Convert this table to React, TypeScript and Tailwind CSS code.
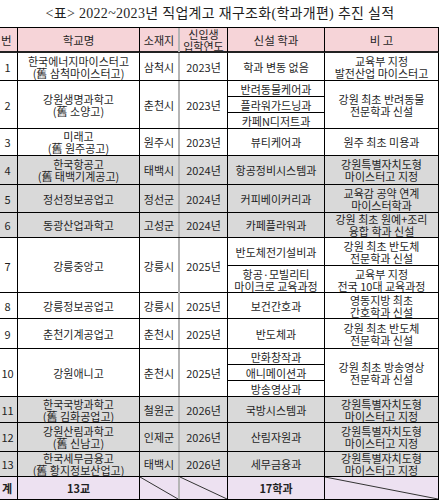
type Row = {
  n: string;
  school: string[];
  loc: string;
  year: string;
  h: number;
  gray?: boolean;
  depts?: string[][];
  note?: string[];
  subs?: { dept: string[]; note: string[]; h: number }[];
};

const rows: Row[] = [
  { n: '1', school: ['한국에너지마이스터고', '(舊 삼척마이스터고)'], loc: '삼척시', year: '2023년', h: 28, depts: [['학과 변동 없음']], note: ['교육부 지정', '발전산업 마이스터고'] },
  { n: '2', school: ['강원생명과학고', '(舊 소양고)'], loc: '춘천시', year: '2023년', h: 48, depts: [['반려동물케어과'], ['플라워가드닝과'], ['카페N디저트과']], note: ['강원 최초 반려동물', '전문학과 신설'] },
  { n: '3', school: ['미래고', '(舊 원주공고)'], loc: '원주시', year: '2023년', h: 27, depts: [['뷰티케어과']], note: ['원주 최초 미용과'] },
  { n: '4', school: ['한국항공고', '(舊 태백기계공고)'], loc: '태백시', year: '2024년', h: 29, gray: true, depts: [['항공정비시스템과']], note: ['강원특별자치도형', '마이스터고 지정'] },
  { n: '5', school: ['정선정보공업고'], loc: '정선군', year: '2024년', h: 28, gray: true, depts: [['커피베이커리과']], note: ['교육감 공약 연계', '마이스터학과'] },
  { n: '6', school: ['동광산업과학고'], loc: '고성군', year: '2024년', h: 25, gray: true, depts: [['카페플라워과']], note: ['강원 최초 원예+조리', '융합 학과 신설'] },
  {
    n: '7', school: ['강릉중앙고'], loc: '강릉시', year: '2025년', h: 55,
    subs: [
      { dept: ['반도체전기설비과'], note: ['강원 최초 반도체', '전문학과 신설'], h: 28 },
      { dept: ['항공·모빌리티', '마이크로 교육과정'], note: ['교육부 지정', '전국 10대 교육과정'], h: 27 },
    ],
  },
  { n: '8', school: ['강릉정보공업고'], loc: '강릉시', year: '2025년', h: 26, depts: [['보건간호과']], note: ['영동지방 최초', '간호학과 신설'] },
  { n: '9', school: ['춘천기계공업고'], loc: '춘천시', year: '2025년', h: 30, depts: [['반도체과']], note: ['강원 최초 반도체', '전문학과 신설'] },
  { n: '10', school: ['강원애니고'], loc: '춘천시', year: '2025년', h: 48, depts: [['만화창작과'], ['애니메이션과'], ['방송영상과']], note: ['강원 최초 방송영상', '전문학과 신설'] },
  { n: '11', school: ['한국국방과학고', '(舊 김화공업고)'], loc: '철원군', year: '2026년', h: 26, gray: true, depts: [['국방시스템과']], note: ['강원특별자치도형', '마이스터고 지정'] },
  { n: '12', school: ['강원산림과학고', '(舊 신남고)'], loc: '인제군', year: '2026년', h: 29, gray: true, depts: [['산림자원과']], note: ['강원특별자치도형', '마이스터고 지정'] },
  { n: '13', school: ['한국세무금융고', '(舊 황지정보산업고)'], loc: '태백시', year: '2026년', h: 25, gray: true, depts: [['세무금융과']], note: ['강원특별자치도형', '마이스터고 지정'] },
];

const cell = 'flex flex-col items-center justify-center text-center border-r border-black';

const Lines = ({ lines }: { lines: string[] }) => (
  <>
    {lines.map((l) => (
      <span key={l} className="whitespace-nowrap">{l}</span>
    ))}
  </>
);

const Diagonal = () => (
  <svg className="absolute inset-0 h-full w-full" viewBox="0 0 100 100" preserveAspectRatio="none">
    <line x1="0" y1="0" x2="100" y2="100" stroke="#333" strokeWidth="1" vectorEffect="non-scaling-stroke" />
  </svg>
);

export default function App() {
  return (
    <div className="w-[440px] h-[500px] overflow-hidden bg-white text-[#1f1f1f] font-['Noto_Sans_CJK_KR',sans-serif]">
      <div className="h-[27px] flex items-center justify-center pb-[1px] text-[14px] tracking-[0.3px] font-['Liberation_Serif','Noto_Sans_CJK_KR',serif]">
        {'<표> 2022~2023년 직업계고 재구조화(학과개편) 추진 실적'}
      </div>

      <div className="w-[439px] border-t border-black text-[11px] leading-[12px]">
        {/* header */}
        <div className="grid grid-cols-[18px_122px_40px_48px_97px_114px] h-[25px] bg-[#f6d4d8] border-b-2 border-[#222]">
          <div className="flex items-center border-r border-black text-[11.5px] pl-[1px]">번</div>
          <div className={`${cell} text-[11.5px]`}>학교명</div>
          <div className="flex items-center justify-center border-r-2 border-[#b5b5b5]">소재지</div>
          <div className={cell}>
            <span>신입생</span>
            <span>입학연도</span>
          </div>
          <div className={`${cell} text-[11.5px]`}>신설 학과</div>
          <div className={`${cell} text-[11.5px]`}>비 고</div>
        </div>

        {rows.map((r) => (
          <div
            key={r.n}
            style={{ height: r.h }}
            className={`grid grid-cols-[18px_122px_40px_48px_211px] border-b border-black ${r.gray ? 'bg-[#d9d9d9]' : 'bg-white'}`}
          >
            <div className={`${cell} pr-[2px]`}>{r.n}</div>
            <div className={cell}>
              <Lines lines={r.school} />
            </div>
            <div className="flex items-center justify-center border-r-2 border-[#b5b5b5]">{r.loc}</div>
            <div className={cell}>{r.year}</div>
            {r.subs ? (
              <div className="flex flex-col">
                {r.subs.map((s, i) => (
                  <div
                    key={i}
                    style={{ height: s.h }}
                    className={`grid grid-cols-[97px_114px] ${i < r.subs!.length - 1 ? 'border-b border-black' : ''}`}
                  >
                    <div className={cell}>
                      <Lines lines={s.dept} />
                    </div>
                    <div className={cell}>
                      <Lines lines={s.note} />
                    </div>
                  </div>
                ))}
              </div>
            ) : (
              <div className="grid grid-cols-[97px_114px]">
                <div className="flex flex-col border-r border-black">
                  {r.depts!.map((d, i) => (
                    <div
                      key={i}
                      className={`flex flex-1 flex-col items-center justify-center text-center ${i < r.depts!.length - 1 ? 'border-b border-black' : ''}`}
                    >
                      <Lines lines={d} />
                    </div>
                  ))}
                </div>
                <div className={cell}>
                  <Lines lines={r.note!} />
                </div>
              </div>
            )}
          </div>
        ))}

        {/* total */}
        <div className="grid grid-cols-[18px_122px_40px_48px_97px_114px] h-[23px] bg-[#ede1f1] border-b border-black">
          <div className="flex items-center border-r border-black font-bold pl-[2px]">계</div>
          <div className={`${cell} font-bold`}>13교</div>
          <div className="relative border-r-2 border-[#b5b5b5]">
            <Diagonal />
          </div>
          <div className="relative border-r border-black">
            <Diagonal />
          </div>
          <div className={`${cell} font-bold`}>17학과</div>
          <div className="relative border-r border-black">
            <Diagonal />
          </div>
        </div>
      </div>
    </div>
  );
}
